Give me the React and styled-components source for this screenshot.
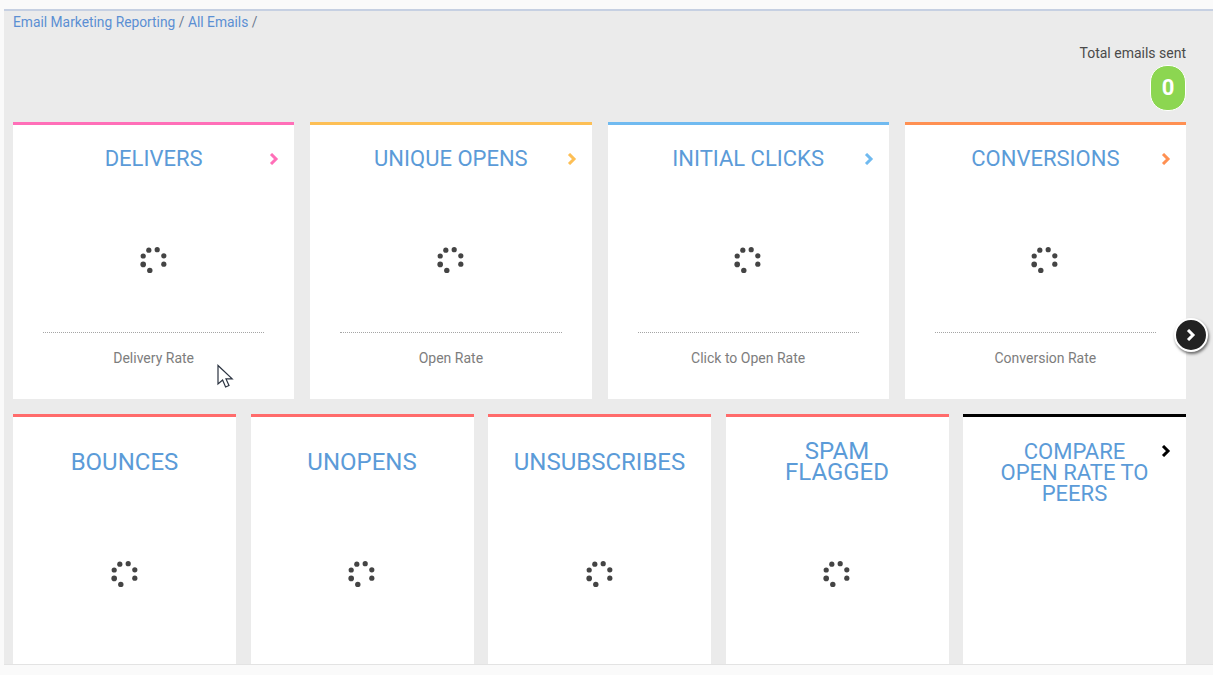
import React from 'react'
import styled, { createGlobalStyle } from 'styled-components'

const GlobalStyle = createGlobalStyle`
  html, body {
    margin: 0;
    height: 100%;
    overflow: hidden;
    background: #fafafa;
    font-family: Roboto, "Liberation Sans", sans-serif;
  }
`

const Panel = styled.div`
  position: relative;
  box-sizing: border-box;
  height: 656px;
  margin: 9px 0 0 4px;
  padding: 3px 27px 0 9px;
  overflow: hidden;
  background: #ebebeb;
  border-top: 2px solid #c6d0e2;
  border-bottom: 1px solid #e3e3e3;
`

const Breadcrumb = styled.div`
  font-size: 13.8px;
  line-height: 16px;
  color: #5b8fd3;
`

const Crumb = styled.a`
  color: inherit;
  text-decoration: none;
`

const Separator = styled.span`
  color: #6b7a90;
`

const Summary = styled.div`
  display: flex;
  flex-direction: column;
  align-items: flex-end;
  margin-top: 15px;
`

const SummaryLabel = styled.div`
  font-size: 14px;
  line-height: 16px;
  color: #4a4a4a;
`

const CountBadge = styled.div`
  box-sizing: border-box;
  width: 36px;
  height: 46px;
  margin: 4px 0 0;
  border: 1px solid #fff;
  border-radius: 17px;
  background: #8cd651;
  color: #fff;
  font-size: 22px;
  font-weight: 700;
  line-height: 44px;
  text-align: center;
`

const CardRow = styled.div`
  display: grid;
  grid-template-columns: repeat(${(p) => p.$columns}, minmax(0, 1fr));
  column-gap: ${(p) => p.$gap}px;
  margin-top: ${(p) => p.$top}px;
`

const Card = styled.div`
  box-sizing: border-box;
  min-height: ${(p) => p.$minHeight || 0}px;
  padding-bottom: 33px;
  background: #fff;
  border-top: 3px solid ${(p) => p.$accent};
`

const CardHead = styled.div`
  display: grid;
  grid-template-columns: ${(p) => p.$inset || 32}px 1fr ${(p) => p.$inset || 32}px;
  padding-top: 24px;
`

const Title = styled.div`
  grid-column: 2;
  display: flex;
  align-items: center;
  justify-content: center;
  min-height: ${(p) => (p.$tall ? 42 : 21)}px;
  margin: ${(p) => (p.$tall ? '0' : '-1px 0 1px')};
  align-self: start;
  font-size: ${(p) => p.$size || 22}px;
  line-height: 21px;
  text-align: center;
  color: #5b9bd8;
`

const Arrow = styled.svg`
  grid-column: 3;
  justify-self: start;
  width: 10px;
  height: 12px;
  margin: 4px 0 0 7px;
  fill: none;
  stroke: ${(p) => p.$color};
  stroke-width: 3;
`

const Loader = styled.svg`
  display: block;
  width: 30px;
  height: 30px;
  margin: ${(p) => p.$top}px auto 0;
  fill: #444;
`

const Divider = styled.div`
  margin: 57px 30px 0;
  border-top: 1px dotted #a5a5a5;
`

const Caption = styled.div`
  margin-top: 17px;
  font-size: 14px;
  line-height: 16px;
  text-align: center;
  color: #7d7d7d;
`

const NextButton = styled.button`
  position: absolute;
  top: 307px;
  right: 5px;
  width: 34px;
  height: 34px;
  padding: 0;
  display: flex;
  align-items: center;
  justify-content: center;
  border: 2px solid #fff;
  border-radius: 50%;
  background: #222;
  box-shadow: 1px 2px 3px rgba(0, 0, 0, 0.55);
`

const NextIcon = styled.svg`
  width: 10px;
  height: 12px;
  fill: none;
  stroke: #fff;
  stroke-width: 3;
`

const Pointer = styled.svg`
  position: absolute;
  top: 353px;
  left: 212px;
  width: 20px;
  height: 26px;
  fill: #fff;
  stroke: #2b3340;
  stroke-width: 1.2;
`

const topCards = [
  { title: 'DELIVERS', caption: 'Delivery Rate', accent: '#ff6fb8' },
  { title: 'UNIQUE OPENS', caption: 'Open Rate', accent: '#fdbf55' },
  { title: 'INITIAL CLICKS', caption: 'Click to Open Rate', accent: '#70baf0' },
  { title: 'CONVERSIONS', caption: 'Conversion Rate', accent: '#ff9052' },
]

const bottomCards = [
  { title: 'BOUNCES' },
  { title: 'UNOPENS' },
  { title: 'UNSUBSCRIBES', inset: 24 },
  { title: 'SPAM FLAGGED' },
]

const loaderDots = [
  [9.8, 5.2, 2.6],
  [18.2, 4.7, 2.6],
  [24.8, 10.8, 2.6],
  [24.8, 19.2, 2.6],
  [10.8, 25.4, 2.7],
  [4.2, 19.4, 2.8],
  [4.2, 11, 2.6],
]

const Spinner = ({ top }) => (
  <Loader $top={top} viewBox="0 0 30 30">
    {loaderDots.map(([cx, cy, r]) => (
      <circle key={`${cx}-${cy}`} cx={cx} cy={cy} r={r} />
    ))}
  </Loader>
)

const Chevron = ({ color }) => (
  <Arrow $color={color} viewBox="0 0 10 12">
    <path d="M2 1l5 5-5 5" />
  </Arrow>
)

const App = () => (
  <>
    <GlobalStyle />
    <Panel>
      <Breadcrumb>
        <Crumb href="#reporting">Email Marketing Reporting</Crumb> <Separator>/</Separator>{' '}
        <Crumb href="#emails">All Emails</Crumb> <Separator>/</Separator>
      </Breadcrumb>
      <Summary>
        <SummaryLabel>Total emails sent</SummaryLabel>
        <CountBadge>0</CountBadge>
      </Summary>
      <CardRow $columns={4} $gap={16} $top={11}>
        {topCards.map((card) => (
          <Card key={card.title} $accent={card.accent}>
            <CardHead>
              <Title>{card.title}</Title>
              <Chevron color={card.accent} />
            </CardHead>
            <Spinner top={75} />
            <Divider />
            <Caption>{card.caption}</Caption>
          </Card>
        ))}
      </CardRow>
      <CardRow $columns={5} $gap={14.5} $top={15}>
        {bottomCards.map((card) => (
          <Card key={card.title} $accent="#ff6b6b" $minHeight={260}>
            <CardHead $inset={card.inset}>
              <Title $tall $size={24}>{card.title}</Title>
            </CardHead>
            <Spinner top={76} />
          </Card>
        ))}
        <Card $accent="#000" $minHeight={260}>
          <CardHead>
            <Title $tall>COMPARE OPEN RATE TO PEERS</Title>
            <Chevron color="#000" />
          </CardHead>
        </Card>
      </CardRow>
      <NextButton type="button" aria-label="Next">
        <NextIcon viewBox="0 0 10 12">
          <path d="M2 1l5 5-5 5" />
        </NextIcon>
      </NextButton>
      <Pointer viewBox="0 0 20 26">
        <path d="M2 1.5v18.5l4.6-4 3 7 3.4-1.5-3-6.6h6.2z" />
      </Pointer>
    </Panel>
  </>
)

export default App
